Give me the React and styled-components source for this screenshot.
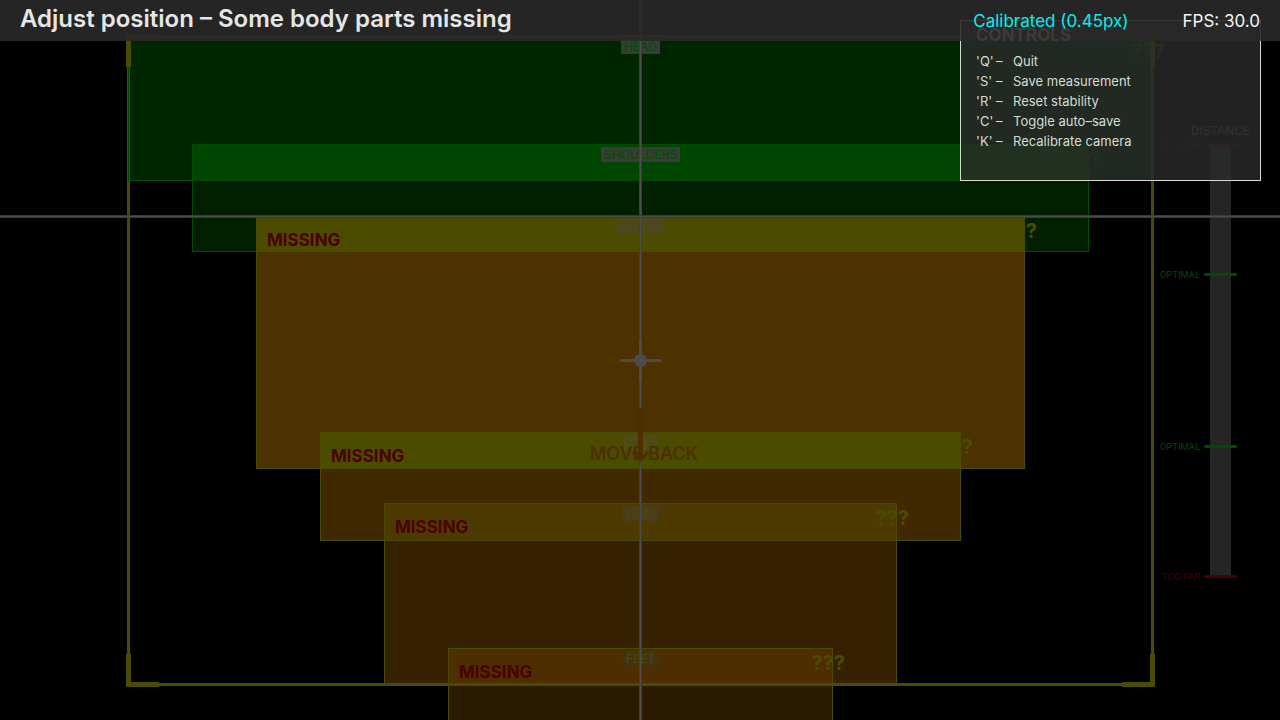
import React from "react";
import styled, { createGlobalStyle } from "styled-components";

const GlobalStyle = createGlobalStyle`
  * { box-sizing: border-box; }
  body {
    margin: 0;
    background: #000;
    font-family: Inter, "Liberation Sans", sans-serif;
  }
`;

const Viewport = styled.main`
  position: relative;
  height: 100vh;
  overflow: hidden;
  background: #000;
`;

const Header = styled.header`
  position: relative;
  z-index: 6;
  display: flex;
  align-items: center;
  gap: 54px;
  height: 41px;
  padding: 0 20px;
  background: rgba(41, 41, 41, 0.9);
`;

const Title = styled.h1`
  flex: 1;
  margin: 0;
  padding-bottom: 4px;
  color: #e6e6e6;
  font-size: 24px;
  font-weight: 600;
  line-height: 28px;
  white-space: nowrap;
`;

const Status = styled.span`
  color: ${(p) => p.$color};
  font-size: 17px;
  font-weight: 400;
  line-height: 20px;
  white-space: nowrap;
`;

const Zone = styled.section`
  position: absolute;
  z-index: 1;
  left: ${(p) => p.$left}%;
  top: ${(p) => p.$top}%;
  display: grid;
  grid-template-columns: 1fr auto 1fr;
  align-items: start;
  width: calc(${(p) => 100 - 2 * p.$left}% + 1px);
  height: calc(${(p) => p.$height}% + 1px);
  border: 1px solid ${(p) => p.$line};
  background: ${(p) =>
    p.$overlap
      ? `linear-gradient(${p.$overlap} calc(${p.$depth}vh - 1px), ${p.$edge} 0 ${p.$depth}vh, ${p.$fill} 0)`
      : p.$fill};
`;

const ZoneTag = styled.h2`
  grid-column: 2;
  margin: 2px 0 0;
  padding: 0 3px;
  background: ${(p) => p.$fill};
  color: ${(p) => p.$color};
  font-size: 12px;
  font-weight: 400;
  line-height: 15px;
`;

const Missing = styled.strong`
  grid-column: 1;
  padding: 11px 0 0 10px;
  color: #4c0000;
  font-size: 17px;
  font-weight: 700;
  line-height: 24px;
`;

const Unknown = styled.span`
  grid-column: 3;
  justify-self: end;
  margin: 2px -13px 0 0;
  color: ${(p) => p.$color};
  font-size: 20px;
  font-weight: 700;
  line-height: 24px;
`;

const Guide = styled.div`
  position: absolute;
  z-index: 2;
  top: calc(5% - 1px);
  left: calc(10% - 1px);
  width: calc(80% + 3px);
  height: calc(90% + 3px);
  border: 3px solid #4c4c00;
`;

const GuideEdge = styled.div`
  height: 20vh;
  margin: 0 -2px;
  border: 1px solid #004c00;
  border-width: 0 1px;
`;

const Corner = styled.div`
  position: absolute;
  ${(p) => p.$v}: -4px;
  ${(p) => p.$h}: -4px;
  width: 33px;
  height: 33px;
  border: 0 solid #4c4c00;
  border-${(p) => p.$v}-width: 5px;
  border-${(p) => p.$h}-width: 5px;
  border-${(p) => p.$v}-${(p) => p.$h}-radius: 2px;
`;

const LineAcross = styled.div`
  position: absolute;
  z-index: 5;
  top: calc(30% - 1px);
  left: 0;
  right: 0;
  height: 3px;
  border: 1px solid #3a3a3a;
  border-width: 1px 0;
  background: #4c4c4c;
`;

const LineDown = styled.div`
  position: absolute;
  z-index: 3;
  top: 0;
  bottom: 0;
  left: calc(50% - 1px);
  width: 3px;
  border: 1px solid #404040;
  border-width: 0 1px;
  background: #4c4c4c;
`;

const Reticle = styled.svg`
  position: absolute;
  z-index: 3;
  top: calc(50% - 21px);
  left: calc(50% - 21px);
`;

const Hint = styled.div`
  position: absolute;
  z-index: 4;
  top: calc(50% + 47px);
  left: 50%;
  width: 120px;
  margin-left: -56px;
  color: #4c2e00;
  text-align: center;
`;

const Arrow = styled.svg`
  position: absolute;
  top: 0;
  left: 46px;
`;

const HintText = styled.p`
  margin: 35px 0 0;
  font-size: 18px;
  font-weight: 600;
  line-height: 24px;
  white-space: nowrap;
`;

const Gauge = styled.aside`
  position: absolute;
  z-index: 1;
  top: 20%;
  right: 49px;
  width: 21px;
  height: 60%;
  background: #252525;
`;

const GaugeTitle = styled.h2`
  position: absolute;
  bottom: calc(100% + 5px);
  left: 50%;
  transform: translateX(-50%);
  margin: 0;
  color: #4c4c4c;
  font-size: 12px;
  font-weight: 400;
  line-height: 16px;
`;

const Tick = styled.div`
  position: absolute;
  top: calc(${(p) => p.$at}% - 1px);
  left: -6px;
  width: 33px;
  height: 3px;
  border-radius: 2px;
  background: ${(p) => p.$color};
`;

const TickLabel = styled.span`
  position: absolute;
  top: -4px;
  right: calc(100% + 4px);
  color: ${(p) => p.$color};
  font-size: 9px;
  line-height: 12px;
  white-space: nowrap;
`;

const Panel = styled.section`
  position: absolute;
  z-index: 5;
  top: 20px;
  right: 19px;
  width: 301px;
  height: 161px;
  padding: 2px 15px;
  border: 1px solid #d2dcd2;
  background: rgba(42, 42, 42, 0.8);
  color: #d2dcd2;
`;

const PanelTitle = styled.h2`
  margin: 0 0 4px;
  font-size: 17px;
  font-weight: 700;
  line-height: 24px;
`;

const Keys = styled.ul`
  margin: 0;
  padding: 0;
  list-style: none;
`;

const KeyRow = styled.li`
  display: grid;
  grid-template-columns: 20px 17px 1fr;
  font-size: 13px;
  line-height: 20px;
`;

const Kbd = styled.kbd`
  font-family: inherit;
`;

const YELLOW = "#4c4c00";
const GREEN = "#004c00";
const RED = "#4c0000";

const zones = [
  { name: "HEAD", left: 10, top: 5, height: 20, line: GREEN, fill: "#002600", tag: "#383c38" },
  { name: "SHOULDERS", left: 15, top: 20, height: 14.8, line: GREEN, fill: "#002000", overlap: "#004600", depth: 5, edge: GREEN, tag: "#3a3c3a" },
  { name: "TORSO", left: 20, top: 30, height: 35, line: YELLOW, fill: "#4b3200", overlap: YELLOW, depth: 4.9, edge: YELLOW, tag: "#4c4626", missing: true },
  { name: "HIPS", left: 25, top: 60, height: 15, line: YELLOW, fill: "#402800", overlap: YELLOW, depth: 5, edge: YELLOW, tag: "#4c4c1e", missing: true },
  { name: "LEGS", left: 30, top: 69.9, height: 25.1, line: YELLOW, fill: "#352100", overlap: "#4c3a00", depth: 5.1, edge: YELLOW, tag: "#4a3e1a", missing: true },
  { name: "FEET", left: 35, top: 90, height: 15, line: YELLOW, fill: "#2a1a00", overlap: "#4c2e00", depth: 5, edge: YELLOW, tag: "#41321a", missing: true },
];

const ticks = [
  { at: 0, label: "TOO CLOSE", color: RED },
  { at: 30, label: "OPTIMAL", color: GREEN },
  { at: 70, label: "OPTIMAL", color: GREEN },
  { at: 100, label: "TOO FAR", color: RED },
];

const keys = [
  ["Q", "Quit"],
  ["S", "Save measurement"],
  ["R", "Reset stability"],
  ["C", "Toggle auto–save"],
  ["K", "Recalibrate camera"],
];

export default function App() {
  return (
    <Viewport>
      <GlobalStyle />
      <Header>
        <Title>Adjust position – Some body parts missing</Title>
        <Status $color="#00f0f0">Calibrated (0.45px)</Status>
        <Status $color="#f4f4f4">FPS: 30.0</Status>
      </Header>

      {zones.map((z) => (
        <Zone
          key={z.name}
          $left={z.left}
          $top={z.top}
          $height={z.height}
          $line={z.line}
          $fill={z.fill}
          $overlap={z.overlap}
          $depth={z.depth}
          $edge={z.edge}
        >
          {z.missing && <Missing>MISSING</Missing>}
          <ZoneTag $fill={z.tag} $color={z.line}>{z.name}</ZoneTag>
          <Unknown $color={z.line}>???</Unknown>
        </Zone>
      ))}

      <Guide>
        <GuideEdge />
        <Corner $v="top" $h="left" />
        <Corner $v="top" $h="right" />
        <Corner $v="bottom" $h="left" />
        <Corner $v="bottom" $h="right" />
      </Guide>

      <LineAcross />
      <LineDown />
      <Reticle width="43" height="43" viewBox="0 0 43 43" aria-hidden="true">
        <path d="M2 21.5H41M21.5 2V41" stroke="#4c4c4c" strokeWidth="3" strokeLinecap="round" />
        <circle cx="21.5" cy="21.5" r="4.5" fill="none" stroke="#4c4c4c" strokeWidth="4" />
      </Reticle>

      <Hint>
        <Arrow width="22" height="56" viewBox="0 0 22 56" aria-hidden="true">
          <path d="M10.5 1V53" fill="none" stroke="#4c2e00" strokeWidth="5" />
          <path d="M2.5 45L10.5 53L18.5 45" fill="none" stroke="#4c2e00" strokeWidth="3" />
        </Arrow>
        <HintText>MOVE BACK</HintText>
      </Hint>

      <Gauge>
        <GaugeTitle>DISTANCE</GaugeTitle>
        {ticks.map((t) => (
          <Tick key={t.at} $at={t.at} $color={t.color}>
            <TickLabel $color={t.color}>{t.label}</TickLabel>
          </Tick>
        ))}
      </Gauge>

      <Panel>
        <PanelTitle>CONTROLS</PanelTitle>
        <Keys>
          {keys.map(([key, action]) => (
            <KeyRow key={key}>
              <Kbd>'{key}'</Kbd>
              <span>–</span>
              <span>{action}</span>
            </KeyRow>
          ))}
        </Keys>
      </Panel>
    </Viewport>
  );
}
